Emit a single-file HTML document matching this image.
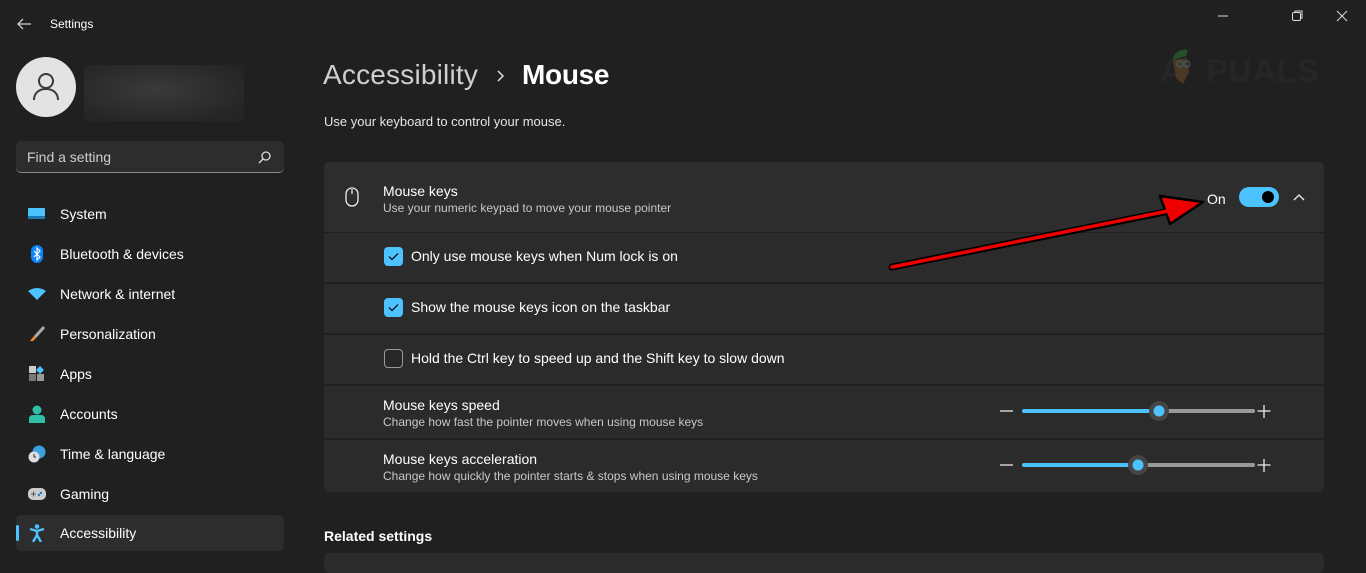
<!DOCTYPE html>
<html><head><meta charset="utf-8"><style>
*{margin:0;padding:0;box-sizing:border-box}
body{width:1366px;height:564px;overflow:hidden;background:#202020;font-family:"Liberation Sans",sans-serif;color:#fff;position:relative}
.abs{position:absolute}
.nav{position:absolute;left:16px;width:268px;height:36px;display:flex;align-items:center;font-size:14px}
.nav .ic{width:18px;height:18px;margin-left:12px;margin-right:14px;display:flex;align-items:center;justify-content:center}
.row{position:absolute;left:324px;width:1000px;background:#2b2b2b}
.cb{position:absolute;left:384px;width:19px;height:19px;border-radius:4px;background:#4cc2ff;display:flex;align-items:center;justify-content:center}
.lbl{position:absolute;left:411px;font-size:14px}
.t{font-size:14px}
.s{font-size:12px;color:#c8c8c8}
</style></head><body>
<svg class="abs" style="left:16px;top:17px" width="16" height="14" viewBox="0 0 16 14"><path d="M15 7H2M7 2L2 7l5 5" stroke="#ccc" stroke-width="1.3" fill="none"/></svg>
<div class="abs" style="left:50px;top:17px;font-size:12px">Settings</div>
<svg class="abs" style="left:1213px;top:10px" width="140" height="14"><path d="M5 6h10" stroke="#ddd"/><rect x="79.5" y="2.5" width="8" height="8" rx="1.5" stroke="#ddd" fill="none"/><path d="M82 2V1h7v7h-1" stroke="#ddd" fill="none"/><path d="M124 1l10 10M134 1l-10 10" stroke="#ddd"/></svg>
<div class="abs" style="left:16px;top:57px;width:60px;height:60px;border-radius:50%;background:#e3e3e3"></div>
<svg class="abs" style="left:32px;top:71px" width="28" height="30" viewBox="0 0 28 30"><circle cx="14" cy="10" r="7" stroke="#3a3a3a" stroke-width="2" fill="none"/><path d="M2 29c0-7 5-11 12-11s12 4 12 11" stroke="#3a3a3a" stroke-width="2" fill="none"/></svg>
<div class="abs" style="left:84px;top:65px;width:160px;height:56px;background:radial-gradient(ellipse at 45% 45%,#3a3a3a,#252525 80%)"></div>
<div class="abs" style="left:16px;top:141px;width:268px;height:32px;background:#2d2d2d;border-radius:5px;border-bottom:1px solid #8a8a8a"></div>
<div class="abs" style="left:27px;top:149px;font-size:14px;color:#cfcfcf">Find a setting</div>
<svg class="abs" style="left:258px;top:150px" width="14" height="14"><circle cx="8" cy="6" r="4" stroke="#ddd" stroke-width="1.3" fill="none"/><path d="M5 9L1 13" stroke="#ddd" stroke-width="1.3"/></svg>

<div class="nav" style="top:196px"><span class="ic"><svg width="18" height="14"><rect y="1" width="17" height="11" rx="1" fill="#4cc2ff"/><rect y="9" width="17" height="3" fill="#1b7ab3"/></svg></span>System</div>
<div class="nav" style="top:236px"><span class="ic"><svg width="12" height="18"><rect width="12" height="18" rx="6" fill="#0a84ff"/><path d="M3 6l6 6-3 3V3l3 3-6 6" stroke="#fff" stroke-width="1.2" fill="none"/></svg></span>Bluetooth &amp; devices</div>
<div class="nav" style="top:276px"><span class="ic"><svg width="18" height="12"><path d="M0 3Q9-3 18 3L9 12Z" fill="#4cc2ff"/></svg></span>Network &amp; internet</div>
<div class="nav" style="top:316px"><span class="ic"><svg width="16" height="16"><path d="M15 1L6 11" stroke="#aaa" stroke-width="3"/><path d="M5 10l2 2-3 3H1z" fill="#f29030"/></svg></span>Personalization</div>
<div class="nav" style="top:356px"><span class="ic"><svg width="16" height="16"><rect width="7" height="7" fill="#ccc"/><rect y="8" width="7" height="7" fill="#777"/><rect x="8" y="8" width="7" height="7" fill="#999"/><path d="M11 0l4 4-4 4-4-4z" fill="#4cc2ff"/></svg></span>Apps</div>
<div class="nav" style="top:396px"><span class="ic"><svg width="16" height="18"><circle cx="8" cy="5" r="4.5" fill="#2dc0a6"/><path d="M0 18v-4q0-4 4-4h8q4 0 4 4v4z" fill="#2dc0a6"/></svg></span>Accounts</div>
<div class="nav" style="top:436px"><span class="ic"><svg width="18" height="18"><circle cx="11" cy="7" r="6.5" fill="#3aa0e0"/><circle cx="6" cy="12" r="5.5" fill="#ddd"/><path d="M6 9v3h2" stroke="#333" fill="none"/></svg></span>Time &amp; language</div>
<div class="nav" style="top:476px"><span class="ic"><svg width="18" height="12"><rect width="18" height="12" rx="5" fill="#ccc"/><path d="M3 6h5M5.5 3.5v5" stroke="#555"/><circle cx="13" cy="5" r="1.2" fill="#1a7ad0"/><circle cx="11" cy="7" r="1.2" fill="#1a7ad0"/></svg></span>Gaming</div>
<div class="nav" style="top:515px;background:#2d2d2d;border-radius:5px"><span class="abs" style="left:0;top:10px;width:3px;height:16px;border-radius:2px;background:#4cc2ff"></span><span class="ic"><svg width="16" height="18"><circle cx="8" cy="2.5" r="2.3" fill="#4cc2ff"/><path d="M1 5l7 2 7-2M8 7v4l-4 7M8 11l4 7" stroke="#4cc2ff" stroke-width="2.4" fill="none"/></svg></span>Accessibility</div>

<div class="abs" style="left:323px;top:59px;font-size:28px;color:#cfcfcf;letter-spacing:0.2px">Accessibility</div>
<svg class="abs" style="left:496px;top:69px" width="10" height="14"><path d="M2 2l5 5-5 5" stroke="#ddd" stroke-width="1.5" fill="none"/></svg>
<div class="abs" style="left:522px;top:59px;font-size:28px;font-weight:bold;letter-spacing:-0.3px">Mouse</div>
<div class="abs" style="left:1160px;top:53px;font-size:32px;font-weight:bold;color:#262626;letter-spacing:1px">A<span style="margin-left:22px">PUALS</span></div>
<svg class="abs" style="left:1168px;top:40px" width="32" height="52"><path d="M4 20q4-12 16-10l-2 6z" fill="#24502a"/><path d="M5 20l14-2 2 14-6 12-7-6z" fill="#4a3826"/><circle cx="12" cy="24" r="3" fill="none" stroke="#3f6270"/><circle cx="19" cy="24" r="3" fill="none" stroke="#3f6270"/></svg>
<div class="abs" style="left:324px;top:114px;font-size:13px;color:#e6e6e6">Use your keyboard to control your mouse.</div>

<div class="abs" style="left:324px;top:162px;width:1000px;height:70px;background:#2d2d2d;border-radius:5px 5px 0 0"></div>
<svg class="abs" style="left:345px;top:187px" width="14" height="20"><rect x="1" y="1" width="12" height="18" rx="6" stroke="#eee" stroke-width="1.3" fill="none"/><path d="M7 2v5" stroke="#eee" stroke-width="1.3"/></svg>
<div class="abs t" style="left:383px;top:183px">Mouse keys</div>
<div class="abs s" style="left:383px;top:201px">Use your numeric keypad to move your mouse pointer</div>
<div class="abs t" style="left:1207px;top:191px">On</div>
<div class="abs" style="left:1239px;top:187px;width:40px;height:20px;border-radius:10px;background:#4cc2ff"></div>
<div class="abs" style="left:1262px;top:191px;width:12px;height:12px;border-radius:50%;background:#000"></div>
<svg class="abs" style="left:1293px;top:193px" width="12" height="8"><path d="M1 7l5-5 5 5" stroke="#eee" stroke-width="1.3" fill="none"/></svg>

<div class="row" style="top:233px;height:49px"></div>
<div class="row" style="top:284px;height:49px"></div>
<div class="row" style="top:335px;height:49px"></div>
<div class="row" style="top:386px;height:52px"></div>
<div class="row" style="top:440px;height:52px;border-radius:0 0 5px 5px"></div>
<div class="cb" style="top:247px"><svg width="11" height="9"><path d="M1 4.5l3 3 6-6" stroke="#000" stroke-width="1.2" fill="none"/></svg></div>
<div class="lbl" style="top:248px">Only use mouse keys when Num lock is on</div>
<div class="cb" style="top:298px"><svg width="11" height="9"><path d="M1 4.5l3 3 6-6" stroke="#000" stroke-width="1.2" fill="none"/></svg></div>
<div class="lbl" style="top:299px">Show the mouse keys icon on the taskbar</div>
<div class="cb" style="top:349px;background:#272727;border:1px solid #9a9a9a"></div>
<div class="lbl" style="top:350px">Hold the Ctrl key to speed up and the Shift key to slow down</div>
<div class="abs t" style="left:383px;top:397px">Mouse keys speed</div>
<div class="abs s" style="left:383px;top:415px">Change how fast the pointer moves when using mouse keys</div>
<div class="abs t" style="left:383px;top:451px">Mouse keys acceleration</div>
<div class="abs s" style="left:383px;top:469px">Change how quickly the pointer starts &amp; stops when using mouse keys</div>

<svg class="abs" style="left:995px;top:400px" width="285" height="80">
<path d="M5 11h13M5 65h13" stroke="#eee" stroke-width="1.3"/>
<path d="M269 5v13M262.5 11h13M269 59v13M262.5 65h13" stroke="#eee" stroke-width="1.3"/>
<path d="M29 11h135" stroke="#4cc2ff" stroke-width="4" stroke-linecap="round"/><path d="M164 11h94" stroke="#9a9a9a" stroke-width="4" stroke-linecap="round"/>
<circle cx="164" cy="11" r="10" fill="#454545"/><circle cx="164" cy="11" r="5.5" fill="#4cc2ff"/>
<path d="M29 65h114" stroke="#4cc2ff" stroke-width="4" stroke-linecap="round"/><path d="M143 65h115" stroke="#9a9a9a" stroke-width="4" stroke-linecap="round"/>
<circle cx="143" cy="65" r="10" fill="#454545"/><circle cx="143" cy="65" r="5.5" fill="#4cc2ff"/>
</svg>

<div class="abs" style="left:324px;top:528px;font-size:14px;font-weight:bold">Related settings</div>
<div class="abs" style="left:324px;top:553px;width:1000px;height:20px;background:#2b2b2b;border-radius:5px"></div>

<svg class="abs" style="left:0;top:0" width="1366" height="564">
<path d="M892 267L1170 211" stroke="#000" stroke-width="7" stroke-linecap="round"/>
<path d="M1203 202L1160 196L1170 224Z" fill="#e00" stroke="#000" stroke-width="2.5" stroke-linejoin="round"/>
<path d="M892 267L1168 211" stroke="#e00" stroke-width="3.5" stroke-linecap="round"/>
</svg>
</body></html>
